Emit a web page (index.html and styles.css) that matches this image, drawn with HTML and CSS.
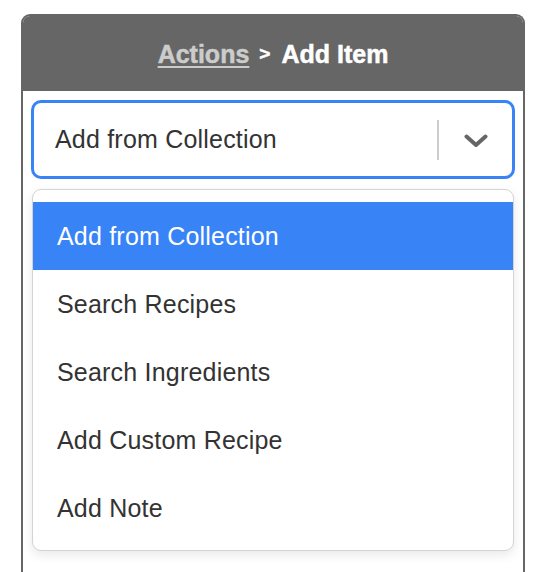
FILE: index.html
```html
<!DOCTYPE html>
<html>
<head>
<meta charset="utf-8">
<link rel="stylesheet" href="styles.css">
</head>
<body>
<div class="card">
  <div class="card-header">
    <a class="crumb-link" href="#">Actions</a><span class="crumb-sep">&gt;</span><span class="crumb-current">Add Item</span>
  </div>
  <div class="card-body">
    <div class="select">
      <div class="select-value">Add from Collection</div>
      <div class="select-indicators">
        <span class="select-separator"></span>
        <span class="select-chevron">
          <svg width="24" height="14" viewBox="0 0 24 14"><path d="M2.5 2.5 L12 11 L21.5 2.5" fill="none" stroke="#666" stroke-width="4" stroke-linecap="round" stroke-linejoin="round"/></svg>
        </span>
      </div>
    </div>
    <div class="menu">
      <div class="option option-active">Add from Collection</div>
      <div class="option">Search Recipes</div>
      <div class="option">Search Ingredients</div>
      <div class="option">Add Custom Recipe</div>
      <div class="option">Add Note</div>
    </div>
  </div>
</div>
</body>
</html>
```
FILE: styles.css
```css
html, body {
  margin: 0;
  padding: 0;
  background: #ffffff;
  overflow: hidden;
}
body {
  padding: 14px 15px 0 21px;
  font-family: "Liberation Sans", Arial, sans-serif;
}
.card {
  width: 504px;
  box-sizing: border-box;
  border: 2px solid #666666;
  border-bottom: none;
  border-radius: 9px 9px 0 0;
  height: 558px;
  background: #ffffff;
}
.card-header {
  background: #666666;
  height: 75px;
  display: flex;
  align-items: center;
  justify-content: center;
  font-weight: bold;
  font-size: 25px;
  color: #ffffff;
  border-radius: 7px 7px 0 0;
  padding-top: 1px;
  box-sizing: border-box;
  -webkit-text-stroke: 0.5px currentColor;
}
.crumb-link {
  color: #cccccc;
  text-decoration: underline;
  text-decoration-thickness: 2px;
  text-underline-offset: 3px;
}
.crumb-sep {
  font-size: 19px;
  margin: 0 11px 0 10px;
  color: #ffffff;
}
.card-body {
  padding: 9px 8px 0 8px;
}
.select {
  height: 79px;
  box-sizing: border-box;
  border: 3px solid #3884f7;
  border-radius: 10px;
  display: flex;
  align-items: center;
  padding-left: 21px;
}
.select-value {
  flex: 1;
  font-size: 25px;
  letter-spacing: 0.2px;
  color: #333333;
}
.select-indicators {
  display: flex;
  align-items: center;
  height: 100%;
}
.select-separator {
  width: 2px;
  height: 40px;
  background: #cccccc;
}
.select-chevron {
  display: flex;
  align-items: center;
  padding: 2px 24px 0 25px;
}
.menu {
  margin: 10px 1px 0 1px;
  border: 1px solid #d4d4d4;
  border-radius: 9px;
  padding: 12px 0 8px 0;
  box-shadow: 0 4px 11px rgba(0, 0, 0, 0.09);
  background: #ffffff;
}
.option {
  height: 68px;
  display: flex;
  align-items: center;
  padding-left: 24px;
  font-size: 25px;
  letter-spacing: 0.2px;
  color: #333333;
}
.option-active {
  background: #3884f7;
  color: #ffffff;
}
```
